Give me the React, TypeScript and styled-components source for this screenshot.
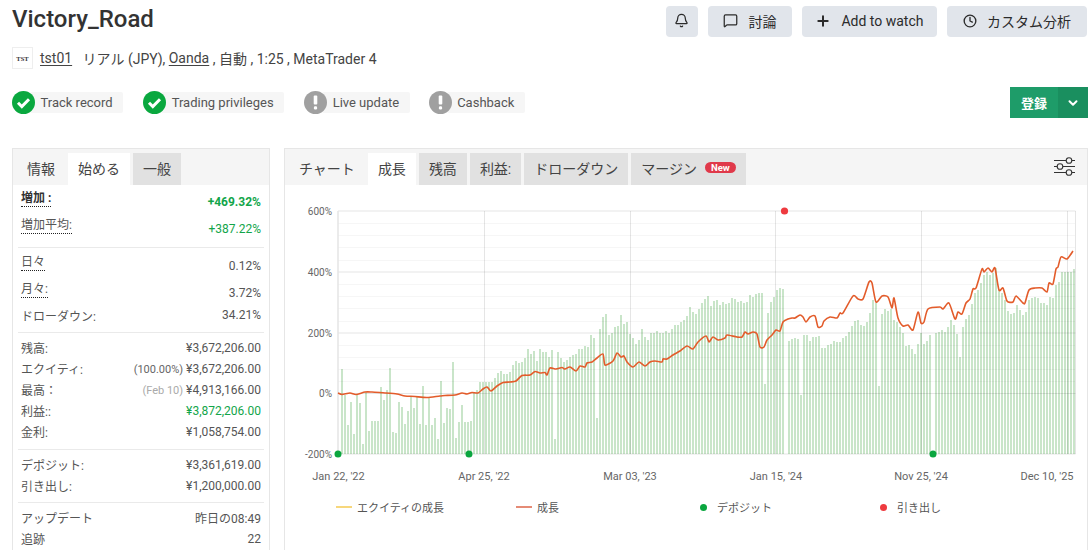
import React from "react";
import styled, { createGlobalStyle } from "styled-components";
import { Bell, MessageSquare, Plus, Clock, ChevronDown } from "lucide-react";

const Global = createGlobalStyle`
  html, body { margin: 0; padding: 0; background: #fff; }
  body { font-family: Roboto, "Noto Sans CJK JP", sans-serif; color: #3c3c3c; }
  #root { width: 1091px; height: 550px; overflow: hidden; }
`;

const Page = styled.div`
  width: 1091px;
  height: 550px;
  overflow: hidden;
  padding: 6px 3px 0 12px;
  box-sizing: border-box;
`;
const TitleRow = styled.div`
  display: flex;
  justify-content: space-between;
  align-items: flex-start;
  height: 41px;
`;
const Title = styled.h1`
  margin: -3px 0 0;
  font-size: 24px;
  line-height: 32px;
  font-weight: 500;
  color: #333;
`;
const Actions = styled.div`
  display: flex;
  gap: 10px;
  margin-right: 1px;
`;
const ActionButton = styled.button<{ $px: number; $gap?: number }>`
  height: 31px;
  padding: 0 ${(p) => p.$px}px 2px;
  display: flex;
  align-items: center;
  gap: ${(p) => p.$gap ?? 10}px;
  border: 0;
  border-radius: 4px;
  background: #e1e5eb;
  color: #2b2b2b;
  font: 400 14px Roboto, "Noto Sans CJK JP", sans-serif;
  white-space: nowrap;
`;
const SubRow = styled.div`
  display: flex;
  align-items: center;
  height: 22px;
  font-size: 14px;
  color: #444;
  white-space: pre;
`;
const Logo = styled.div`
  width: 21px;
  height: 22px;
  margin-right: 7px;
  border: 1px solid #eee;
  box-sizing: border-box;
  display: flex;
  align-items: center;
  justify-content: center;
  font: 700 6.5px "Liberation Serif", serif;
  color: #333;
`;
const Link = styled.span`
  text-decoration: underline;
  text-underline-offset: 2px;
`;
const StatusRow = styled.div`
  display: flex;
  justify-content: space-between;
  align-items: center;
  margin-top: 18px;
  height: 31px;
`;
const Badges = styled.div`
  display: flex;
  align-items: center;
`;
const Badge = styled.div<{ $gap: number }>`
  display: flex;
  align-items: center;
  height: 23px;
  margin-right: ${(p) => p.$gap}px;
`;
const BadgeLabel = styled.span`
  margin-left: -5px;
  height: 21px;
  padding: 0 10.5px;
  display: flex;
  align-items: center;
  background: #f6f6f6;
  border-radius: 2px;
  font-size: 13px;
  color: #555;
`;
const BadgeIcon = styled.svg`
  width: 23px;
  height: 23px;
  position: relative;
  z-index: 1;
  flex: none;
`;
const Register = styled.div`
  display: flex;
  width: 78px;
  height: 31px;
  color: #fff;
  font-size: 13px;
  font-weight: 700;
`;
const RegisterMain = styled.div`
  flex: 1;
  background: #1e9c69;
  display: flex;
  align-items: center;
  justify-content: center;
`;
const RegisterArrow = styled.div`
  width: 30px;
  background: #1a8f5f;
  display: flex;
  align-items: center;
  justify-content: center;
`;
const Columns = styled.div`
  display: flex;
  gap: 14px;
  margin-top: 30px;
`;
const Card = styled.section<{ $w: number }>`
  width: ${(p) => p.$w}px;
  height: 420px;
  box-sizing: border-box;
  border: 1px solid #e6e6e6;
  flex: none;
`;
const TabBar = styled.div`
  height: 36px;
  box-sizing: border-box;
  padding: 4px 0 0 4px;
  background: #f5f5f5;
  display: flex;
  gap: 3px;
  position: relative;
`;
const Tab = styled.div<{ $state?: "active" | "off" }>`
  height: 32px;
  box-sizing: border-box;
  padding: 0 10px 3px;
  display: flex;
  align-items: center;
  gap: 8px;
  font-size: 14px;
  color: #444;
  white-space: nowrap;
  background: ${(p) =>
    p.$state === "active" ? "#fff" : p.$state === "off" ? "#e1e1e1" : "transparent"};
`;
const NewTag = styled.span`
  background: #e0394a;
  color: #fff;
  font-size: 9.5px;
  font-weight: 700;
  line-height: 11px;
  padding: 0 6px;
  border-radius: 6px;
`;
const SliderIcon = styled.svg`
  position: absolute;
  right: 11px;
  top: 7px;
  width: 23px;
  height: 21px;
`;
const Group = styled.div<{ $last?: boolean; $py: string }>`
  margin: 0 5px;
  padding: ${(p) => p.$py};
  border-bottom: ${(p) => (p.$last ? "0" : "1px solid #eaeaea")};
`;
const Row = styled.div<{ $h: number }>`
  height: ${(p) => p.$h}px;
  padding: 0 3px;
  display: flex;
  justify-content: space-between;
  align-items: center;
  font-size: 12px;
  color: #555;
  white-space: nowrap;
`;
const Label = styled.span<{ $dotted?: boolean; $bold?: boolean }>`
  ${(p) => (p.$dotted ? "border-bottom: 1px dotted #222; line-height: 15px; margin-top: -3px;" : "")}
  font-weight: ${(p) => (p.$bold ? 700 : 400)};
  color: ${(p) => (p.$bold ? "#333" : "#555")};
`;
const Value = styled.span<{ $tone?: "green"; $bold?: boolean; $drop?: boolean }>`
  color: ${(p) => (p.$tone === "green" ? "#12a54a" : "#555")};
  font-weight: ${(p) => (p.$bold ? 700 : 400)};
  ${(p) => (p.$drop ? "margin-top: 3px;" : "")}
`;
const Note = styled.span<{ $light?: boolean }>`
  font-size: 11px;
  color: ${(p) => (p.$light ? "#aaa" : "#666")};
  margin-right: 3px;
`;
const ChartBody = styled.div`
  padding-top: 0;
`;
const ChartSvg = styled.svg`
  display: block;
  width: 802px;
  height: 307px;
`;
const YText = styled.text`
  font: 400 10px Roboto, sans-serif;
  fill: #666;
`;
const XText = styled.text`
  font: 400 11px Roboto, sans-serif;
  fill: #666;
`;
const Legend = styled.div`
  display: grid;
  grid-template-columns: repeat(4, 180px);
  padding: 7px 0 0 51px;
`;
const LegendItem = styled.div`
  display: flex;
  align-items: center;
  gap: 5px;
  height: 16px;
  font-size: 11px;
  color: #555;
`;
const LegendLine = styled.span<{ $c: string }>`
  width: 16px;
  height: 1.5px;
  background: ${(p) => p.$c};
`;
const LegendDot = styled.span<{ $c: string }>`
  width: 7px;
  height: 7px;
  margin: 0 5px 0 4px;
  border-radius: 50%;
  background: ${(p) => p.$c};
`;

const barsA = [369,395,425,402,434,395,403,444,392,431,421,421,421,387,400,390,368,432,433,402,407,424,411,397,408,397,424,386,425,397,425,418,439,381,423,408,409,362,438,422,405,422,422,421,393,390,382,382,382,382,382,378,373,371,374,374,372,365,361,363,362,358,349,354,351,361,349,352,352,357,350,439,352,358,362,360,357,355,354,349];
const barsB = [349,346,347,335,338,418,329,317,314,335,333,327,326,315,324,322,334,338,344,340,329,337,340,333,333,331,333,333,331,333,329,325,325,322,320,316,307,312,314,309,303,299,296,306,301,300,305,302,304,303,298,299,302,301,303,302,295,297,294,293,293,384,313,302,297,290,288,289,454,341,339,338,339,395,335,335,341,337,337,336,348,348,345,344,341,342];
const barsC = [342,338,336,332,326,321,320,325,326,322,313,300,303,386,314,309,311,309,320,322,327,333,346,345,349,354,344,333,344,341,335,454,333,332,330,332,327,320,325,334,357,327,319,315,304,293,290,283,275,272,275,273,268,289,293,300,311,314,313,305,310,315,312,300,298,297,298,303,303,305,297,298,285,282,272,272,272,272,269];

const line: [number, number][] = [
  [338,393],[342,394.5],[350,393],[356,394.5],[365,392],[372,392],[385,393],[397,394],[405,396],[415,396.5],[427,397.5],[440,396],[445,395.5],[455,395],[462,393],[467,394],[472,392.5],[478,393],[483,389],[487,387],[491,391],[497,386],[503,382.5],[510,382],[516,381],[522,375.5],[530,375],[535,371.5],[540,373],[545,372.5],[547,375],[550,368],[556,369],[562,367.5],[565,369],[570,367],[576,371],[580,366],
  [585,367],[587,363],[592,362],[597,358],[603,354],[605,365],[613,361],[617,353],[621,357],[624,356],[627,362],[633,367],[639,362],[645,366],[650,362],[655,361],[662,362],[663,359],[667,359],[673,355],[680,351],[687,346],[693,349],[698,342],[706,336],[709,342],[713,337],[718,340],[725,338],[727,335],[737,337],[742,337],[745,332],[748,334],[753,332],[757,334],[760,347],[764,347],[767,340],[772,335],[776,330],[780,331],[783,322],[788,319],[792,318],[795,318],[800,315],[803,317],[806,322],[810,317],[815,316],[818,327],[822,326],[824,321],[830,317],[837,318],
  [840,313],[843,313],[853,296],[858,299],[863,299],[869,282],[872,283],[876,302],[882,296],[888,297],[892,308],[894,298],[898,318],[903,326],[908,325],[913,330],[918,312],[921,323],[924,322],[928,309],[940,307],[943,309],[949,303],[955,319],[958,312],[962,314],[966,303],[970,299],[973,289],[976,288],[982,269],[984,272],[988,268],[992,272],[995,268],[999,290],[1003,288],[1007,301],[1013,302],[1016,296],[1023,303],[1025,303],[1029,290],[1035,288],[1042,288],[1047,292],[1049,283],[1053,284],[1056,269],[1058,267],[1061,257],[1067,259],[1073,251],
];

function smooth(p: [number, number][]): string {
  let d = `M${p[0][0]} ${p[0][1]}`;
  for (let i = 0; i < p.length - 1; i++) {
    const a = p[Math.max(0, i - 1)], b = p[i], c = p[i + 1], e = p[Math.min(p.length - 1, i + 2)];
    const k = 0.12;
    d += `C${(b[0] + (c[0] - a[0]) * k).toFixed(1)} ${(b[1] + (c[1] - a[1]) * k).toFixed(1)} ${(c[0] - (e[0] - b[0]) * k).toFixed(1)} ${(c[1] - (e[1] - b[1]) * k).toFixed(1)} ${c[0]} ${c[1]}`;
  }
  return d;
}

const major = [211, 272, 333, 393.5, 454];
const minor = [223, 235, 247, 260, 284, 296, 308, 321, 345, 357, 369, 381];
const verticals = [484.5, 630.5, 775.5, 921.5, 1067.5, 1075.5];
const yLabels: [string, number][] = [["600%", 215], ["400%", 276], ["200%", 337], ["0%", 397], ["-200%", 458]];
const xLabels: [string, number][] = [["Jan 22, '22", 338.5], ["Apr 25, '22", 484], ["Mar 03, '23", 630], ["Jan 15, '24", 776], ["Nov 25, '24", 921], ["Dec 10, '25", 1047]];

function Bars({ start, data }: { start: number; data: number[] }) {
  return (
    <>
      {data.map((y, i) => (
        <rect key={i} x={start + i * 3 - 1} y={y} width={2} height={454 - y} fill="#c9e5c9" />
      ))}
    </>
  );
}

function Chart() {
  return (
    <ChartSvg viewBox="285 185 802 307">
      <Bars start={342} data={barsA} />
      <Bars start={582} data={barsB} />
      <Bars start={840} data={barsC} />
      {minor.map((y) => <line key={y} x1={338} x2={1075} y1={y + 0.5} y2={y + 0.5} stroke="#000" strokeOpacity={0.035} />)}
      {major.map((y) => <line key={y} x1={338} x2={1075.5} y1={y} y2={y} stroke="#000" strokeOpacity={0.1} />)}
      <line x1={338} x2={338} y1={211} y2={454} stroke="#e4e4e4" strokeWidth={1.5} />
      {verticals.map((x) => <line key={x} x1={x} x2={x} y1={211} y2={454} stroke="#000" strokeOpacity={0.1} />)}
      <path d={smooth(line)} fill="none" stroke="#e35c2b" strokeWidth={1.6} strokeLinejoin="round" />
      {[338, 469, 933].map((x) => <circle key={x} cx={x} cy={454} r={3.5} fill="#0aa63f" />)}
      <circle cx={784.5} cy={211} r={3.6} fill="#ee3a3f" />
      {yLabels.map(([t, y]) => <YText key={t} x={332} y={y} textAnchor="end">{t}</YText>)}
      {xLabels.map(([t, x]) => <XText key={t} x={x} y={480} textAnchor="middle">{t}</XText>)}
    </ChartSvg>
  );
}

function CheckIcon() {
  return (
    <BadgeIcon viewBox="0 0 23 23">
      <circle cx="11.5" cy="11.5" r="11.5" fill="#0aa83f" />
      <path d="M6 11.8l3.8 3.8 7.2-7.4" fill="none" stroke="#fff" strokeWidth="3" />
    </BadgeIcon>
  );
}
function WarnIcon() {
  return (
    <BadgeIcon viewBox="0 0 23 23">
      <circle cx="11.5" cy="11.5" r="11.5" fill="#a0a0a0" />
      <rect x="9.7" y="4.5" width="3.6" height="9" rx="1" fill="#fff" />
      <rect x="9.9" y="15.2" width="3.2" height="3.2" rx="1.2" fill="#fff" />
    </BadgeIcon>
  );
}

export default function App() {
  return (
    <Page>
      <Global />
      <TitleRow>
        <Title>Victory_Road</Title>
        <Actions>
          <ActionButton $px={8.5}><Bell size={15} strokeWidth={2} /></ActionButton>
          <ActionButton $px={15.5}><MessageSquare size={15} strokeWidth={2} />討論</ActionButton>
          <ActionButton $px={13.5}><Plus size={16} strokeWidth={3} />Add to watch</ActionButton>
          <ActionButton $px={16}><Clock size={14} strokeWidth={2.3} />カスタム分析</ActionButton>
        </Actions>
      </TitleRow>
      <SubRow>
        <Logo>TST</Logo>
        <Link>tst01</Link>
        {"   リアル (JPY), "}
        <Link>Oanda</Link>
        {" , 自動 , 1:25 , MetaTrader 4"}
      </SubRow>
      <StatusRow>
        <Badges>
          <Badge $gap={20}><CheckIcon /><BadgeLabel>Track record</BadgeLabel></Badge>
          <Badge $gap={20}><CheckIcon /><BadgeLabel>Trading privileges</BadgeLabel></Badge>
          <Badge $gap={19}><WarnIcon /><BadgeLabel>Live update</BadgeLabel></Badge>
          <Badge $gap={0}><WarnIcon /><BadgeLabel>Cashback</BadgeLabel></Badge>
        </Badges>
        <Register>
          <RegisterMain>登録</RegisterMain>
          <RegisterArrow><ChevronDown size={14} strokeWidth={3.4} /></RegisterArrow>
        </Register>
      </StatusRow>
      <Columns>
        <Card $w={258}>
          <TabBar>
            <Tab>情報</Tab>
            <Tab $state="active">始める</Tab>
            <Tab $state="off">一般</Tab>
          </TabBar>
          <Group $py="2px 0 6px">
            <Row $h={27}><Label $dotted $bold>増加 :</Label><Value $tone="green" $bold $drop>+469.32%</Value></Row>
            <Row $h={27}><Label $dotted>増加平均:</Label><Value $tone="green" $drop>+387.22%</Value></Row>
          </Group>
          <Group $py="3px 0 7px">
            <Row $h={27}><Label $dotted>日々</Label><Value $drop>0.12%</Value></Row>
            <Row $h={27}><Label $dotted>月々:</Label><Value $drop>3.72%</Value></Row>
            <Row $h={20}><Label>ドローダウン:</Label><Value>34.21%</Value></Row>
          </Group>
          <Group $py="4px 0 7px">
            <Row $h={21}><Label>残高:</Label><Value>¥3,672,206.00</Value></Row>
            <Row $h={21}><Label>エクイティ:</Label><Value><Note>(100.00%)</Note>¥3,672,206.00</Value></Row>
            <Row $h={21}><Label>最高：</Label><Value><Note $light>(Feb 10)</Note>¥4,913,166.00</Value></Row>
            <Row $h={21}><Label>利益::</Label><Value $tone="green">¥3,872,206.00</Value></Row>
            <Row $h={21}><Label>金利:</Label><Value>¥1,058,754.00</Value></Row>
          </Group>
          <Group $py="4px 0 6px">
            <Row $h={21}><Label>デポジット:</Label><Value>¥3,361,619.00</Value></Row>
            <Row $h={21}><Label>引き出し:</Label><Value>¥1,200,000.00</Value></Row>
          </Group>
          <Group $last $py="4px 0 0">
            <Row $h={21}><Label>アップデート</Label><Value>昨日の08:49</Value></Row>
            <Row $h={21}><Label>追跡</Label><Value>22</Value></Row>
          </Group>
        </Card>
        <Card $w={804}>
          <TabBar>
            <Tab>チャート</Tab>
            <Tab $state="active">成長</Tab>
            <Tab $state="off">残高</Tab>
            <Tab $state="off">利益:</Tab>
            <Tab $state="off">ドローダウン</Tab>
            <Tab $state="off">マージン<NewTag>New</NewTag></Tab>
            <SliderIcon viewBox="0 0 23 21" fill="none" stroke="#333">
              <path d="M1 4.5h21M1 10.5h21M1 16.5h21" strokeWidth="1.1" />
              <circle cx="16" cy="4.5" r="2.8" fill="#f5f5f5" strokeWidth="1.1" />
              <circle cx="7" cy="10.5" r="2.8" fill="#f5f5f5" strokeWidth="1.1" />
              <circle cx="16" cy="16.5" r="2.8" fill="#f5f5f5" strokeWidth="1.1" />
            </SliderIcon>
          </TabBar>
          <ChartBody>
            <Chart />
            <Legend>
              <LegendItem><LegendLine $c="#f7d77c" />エクイティの成長</LegendItem>
              <LegendItem><LegendLine $c="#e58b76" />成長</LegendItem>
              <LegendItem><LegendDot $c="#0aa63f" />デポジット</LegendItem>
              <LegendItem><LegendDot $c="#ee3a3f" />引き出し</LegendItem>
            </Legend>
          </ChartBody>
        </Card>
      </Columns>
    </Page>
  );
}
